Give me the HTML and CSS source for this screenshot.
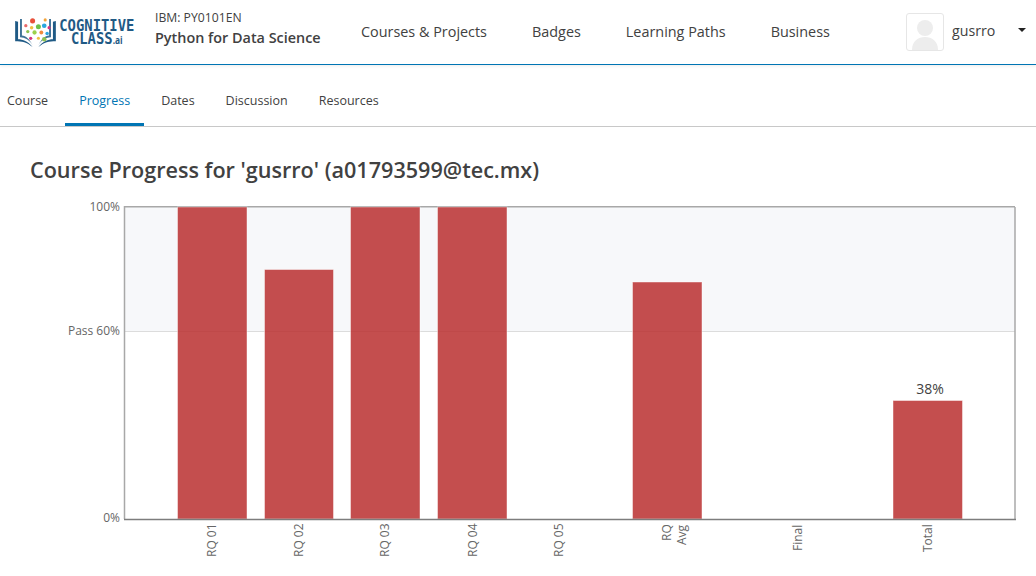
FILE: index.html
```
<!DOCTYPE html>
<html lang="en">
<head>
<meta charset="utf-8">
<title>Course Progress</title>
<link rel="stylesheet" href="styles.css">
</head>
<body>
<header class="site-header">
  <a class="logo" href="#" aria-label="Cognitive Class">
    <svg class="logo-mark" width="45" height="31" viewBox="0 0 44 32">
      <g class="book">
        <path d="M1 4v21c7 0 12 1 18 6-5-6-10-8-15-8V5z"/>
        <path d="M8 2H6v19c5 0 10 3 13 8-3-6-7-10-11-10z" opacity=".85"/>
        <path d="M43 4v21c-7 0-12 1-18 6 5-6 10-8 15-8V5z"/>
        <path d="M36 2h2v19c-5 0-10 3-13 8 3-6 7-10 11-10z" opacity=".85"/>
      </g>
      <circle cx="19" cy="4" r="2.6" fill="#e8503a"/>
      <circle cx="32" cy="3" r="1.6" fill="#f2a33a"/>
      <circle cx="12" cy="9" r="1.7" fill="#e86a6a"/>
      <circle cx="18" cy="11" r="1.8" fill="#f0c040"/>
      <circle cx="25" cy="10" r="2.6" fill="#6cc04a"/>
      <circle cx="31" cy="9" r="2.4" fill="#2ba6de"/>
      <circle cx="36" cy="11" r="1.6" fill="#d6337c"/>
      <circle cx="14" cy="15" r="1.7" fill="#8cc152"/>
      <circle cx="21" cy="16" r="2.2" fill="#9ad14b"/>
      <circle cx="28" cy="16" r="2" fill="#f08a3c"/>
      <circle cx="34" cy="17" r="1.8" fill="#2ba6de"/>
      <circle cx="17" cy="22" r="1.7" fill="#d6337c"/>
      <circle cx="25" cy="22" r="1.6" fill="#f0c040"/>
      <circle cx="31" cy="23" r="2.3" fill="#8cc152"/>
    </svg>
    <span class="logo-text">
      <span class="logo-top">COGNITIVE</span>
      <span class="logo-bottom">CLASS<small>.ai</small></span>
    </span>
  </a>
  <div class="course-id">
    <div class="course-org">IBM: PY0101EN</div>
    <div class="course-name">Python for Data Science</div>
  </div>
  <nav class="main-nav">
    <a href="#">Courses &amp; Projects</a>
    <a href="#">Badges</a>
    <a href="#">Learning Paths</a>
    <a href="#">Business</a>
  </nav>
  <div class="user">
    <div class="avatar">
      <svg width="36" height="36" viewBox="0 0 36 36">
        <circle cx="18" cy="14" r="8"/>
        <path d="M5 36c0-9 6-13 13-13s13 4 13 13z"/>
      </svg>
    </div>
    <span class="user-name">gusrro</span>
    <span class="caret"></span>
  </div>
</header>
<nav class="tabs">
  <a href="#">Course</a>
  <a href="#" class="active">Progress</a>
  <a href="#">Dates</a>
  <a href="#">Discussion</a>
  <a href="#">Resources</a>
</nav>
<main>
  <h1 class="page-title">Course Progress for 'gusrro' (a01793599@tec.mx)</h1>
  <svg class="chart" width="1036" height="390" viewBox="0 186 1036 390">
    <rect class="band" x="125" y="207" width="890" height="124"/>
    <line class="grid" x1="125" y1="331.5" x2="1015" y2="331.5"/>
    <path class="frame" d="M124.500 519V206.750H1015"/>
    <path class="frame" d="M1015 207V519"/>
    <g class="bars">
      <rect x="177.500" y="207" width="69.500" height="312"/>
      <rect x="264.500" y="269.500" width="69" height="249.500"/>
      <rect x="350.500" y="207" width="69.500" height="312"/>
      <rect x="437.500" y="207" width="69.500" height="312"/>
      <rect x="632.500" y="282" width="69.500" height="237"/>
      <rect x="893" y="400.500" width="69.500" height="118.500"/>
    </g>
    <line class="axis" x1="124" y1="519.500" x2="1016" y2="519.500"/>
    <g class="y-labels">
      <text x="120" y="211">100%</text>
      <text x="120" y="335">Pass 60%</text>
      <text x="120" y="522">0%</text>
    </g>
    <text class="value" x="930" y="394">38%</text>
    <g class="x-labels">
      <text transform="translate(216 557) rotate(-90)">RQ 01</text>
      <text transform="translate(303 557) rotate(-90)">RQ 02</text>
      <text transform="translate(389 557) rotate(-90)">RQ 03</text>
      <text transform="translate(477 557) rotate(-90)">RQ 04</text>
      <text transform="translate(563 557) rotate(-90)">RQ 05</text>
      <text transform="translate(671 541) rotate(-90)">RQ</text>
      <text transform="translate(686 545) rotate(-90)">Avg</text>
      <text transform="translate(802 551) rotate(-90)">Final</text>
      <text transform="translate(932 552) rotate(-90)">Total</text>
    </g>
  </svg>
</main>
</body>
</html>
```
FILE: styles.css
```
* { box-sizing: border-box; }
html, body { margin: 0; padding: 0; }
body {
  width: 1036px;
  height: 576px;
  overflow: hidden;
  background: #fff;
  color: #414141;
  font-family: "Open Sans", "Noto Sans", sans-serif;
}
a { color: inherit; text-decoration: none; }

.site-header {
  display: flex;
  align-items: center;
  height: 65px;
  border-bottom: 1px solid #0075b4;
  box-shadow: 0 1px 3px rgba(0, 0, 0, .08);
  padding-left: 13px;
}
.logo { display: flex; align-items: center; gap: 1px; width: 142px; color: #1f5a85; }
.logo-mark { flex: none; }
.book path { fill: #1f5a85; }
.logo-text {
  display: flex;
  flex-direction: column;
  align-items: center;
  font-family: "DejaVu Sans Mono", "Liberation Mono", monospace;
  font-weight: 700;
  line-height: 13px;
  transform: scaleX(.84);
  transform-origin: left center;
  width: 90px;
  flex: none;
}
.logo-top { font-size: 16.500px; height: 13px; white-space: nowrap; }
.logo-bottom { font-size: 16.500px; height: 13px; white-space: nowrap; }
.logo-bottom small { font-size: 10px; font-family: "Open Sans", sans-serif; }

.course-id { width: 206px; color: #414141; margin-top: -9px; }
.course-org { font-size: 12.200px; line-height: 17px; padding-bottom: 2px; }
.course-name { font-size: 14.400px; font-weight: 600; line-height: 19px; }

.main-nav { display: flex; gap: 45px; font-size: 14.400px; width: 545px; margin-top: -2px; }

.user { display: flex; align-items: center; }
.avatar {
  width: 38px;
  height: 38px;
  border: 1px solid #e6e6e6;
  border-radius: 3px;
  overflow: hidden;
}
.avatar svg { display: block; fill: #ededed; }
.user-name { font-size: 14.200px; margin-left: 8px; width: 66px; margin-top: -3px; }
.caret {
  width: 0;
  height: 0;
  border-left: 4px solid transparent;
  border-right: 4px solid transparent;
  border-top: 4px solid #222;
  margin-top: -5px;
}

.tabs {
  display: flex;
  gap: 3px;
  height: 62px;
  border-bottom: 1px solid #c8c8c8;
  font-size: 12.500px;
}
.tabs a {
  display: flex;
  align-items: center;
  padding: 13px 14px 0;
  border-bottom: 3px solid transparent;
  height: 61px;
}
.tabs a:first-child { padding-left: 7px; }
.tabs a.active { color: #0075b4; border-bottom-color: #0075b4; }

.page-title {
  margin: 0;
  padding: 28px 0 0 30px;
  height: 59px;
  font-size: 21.600px;
  font-weight: 600;
  line-height: 29px;
  color: #414141;
}
.chart { display: block; }
.band { fill: #f7f8fa; }
.grid { stroke: #dcdcdc; stroke-width: 1; }
.bars rect {
  fill: #b92c2c;
  fill-opacity: .84;
  stroke: #fff;
  stroke-opacity: .45;
  stroke-width: 1;
}
.frame { fill: none; stroke: #a8a8a8; stroke-width: 1.500; }
.axis { stroke: #7d7d7d; stroke-width: 1.500; }
.y-labels text { font-size: 12px; fill: #666; text-anchor: end; }
.x-labels text { font-size: 12px; fill: #666; }
.value { font-size: 14px; fill: #414141; text-anchor: middle; }
```
